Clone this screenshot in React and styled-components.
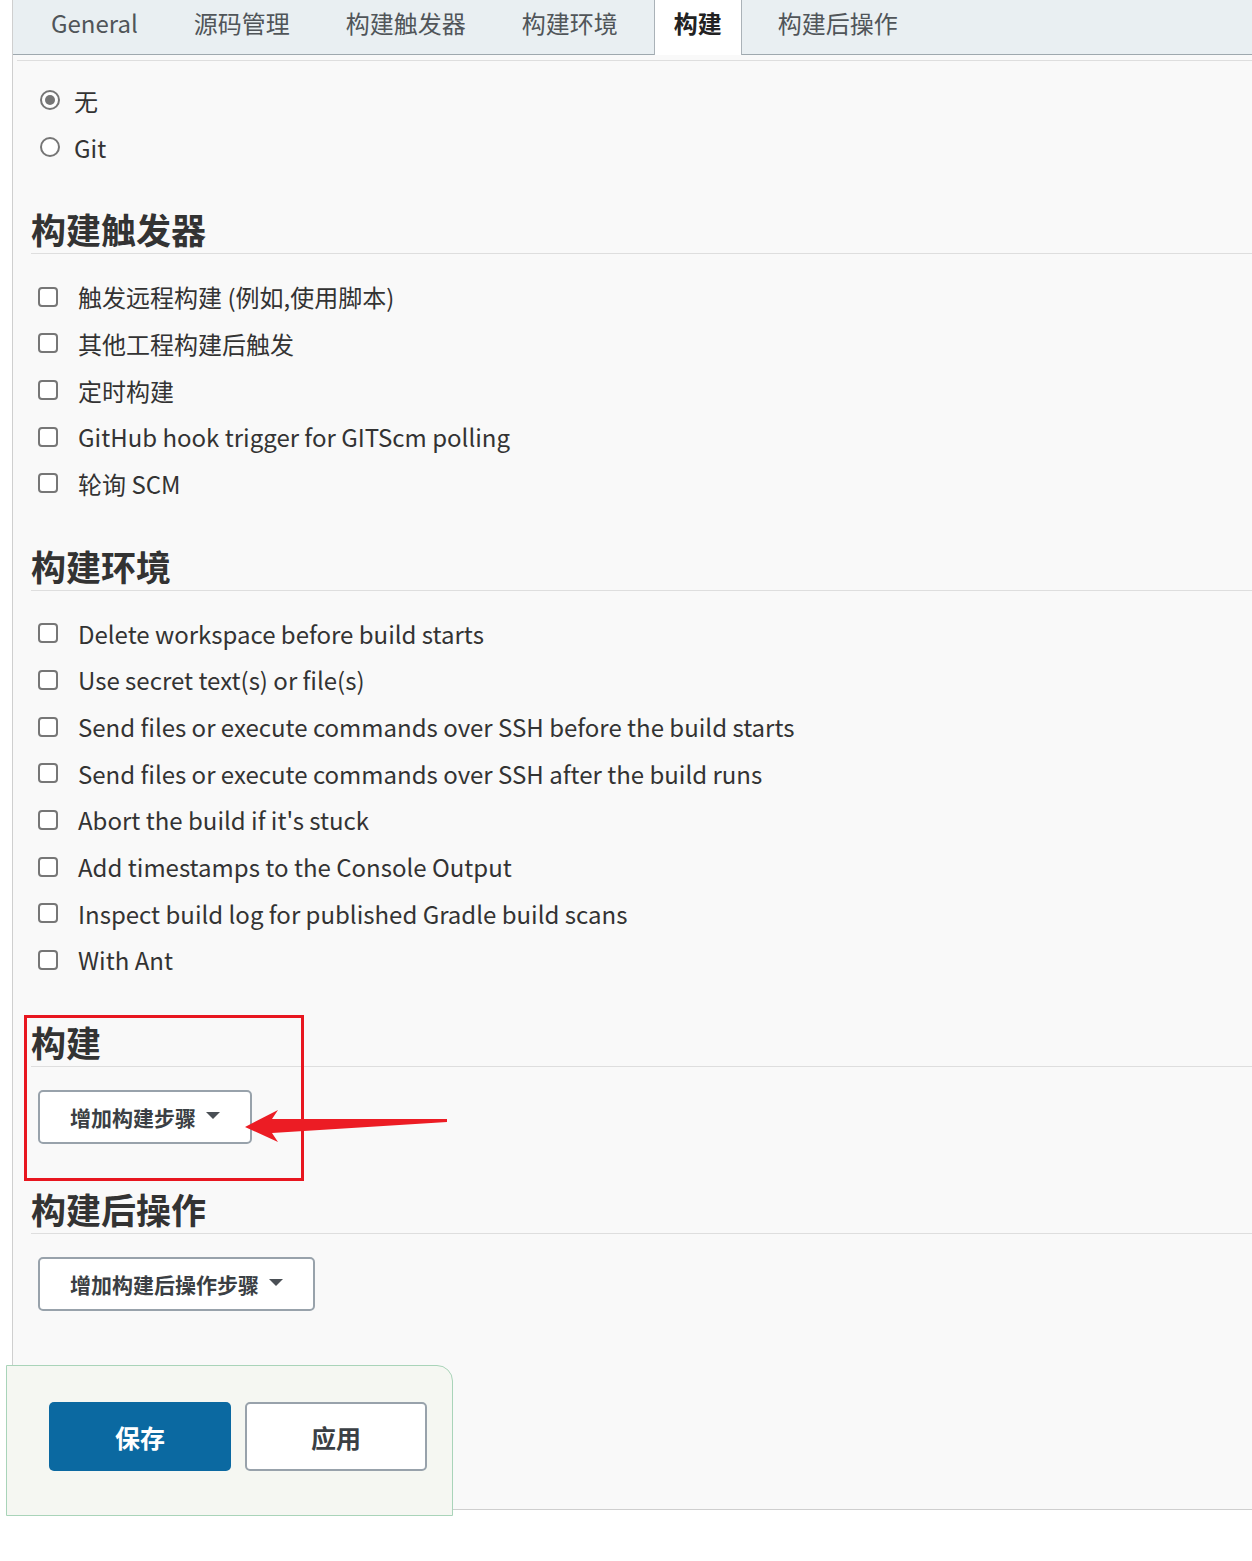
import React from 'react'
import styled, { createGlobalStyle } from 'styled-components';

const GlobalStyle = createGlobalStyle`
  html, body {
    margin: 0;
    padding: 0;
    background: #fff;
  }
  body {
    font-family: "Noto Sans CJK SC", "Noto Sans", sans-serif;
    color: #333;
  }
`

const tabs = ['General', '源码管理', '构建触发器', '构建环境', '构建', '构建后操作']

const triggers = [
  '触发远程构建 (例如,使用脚本)',
  '其他工程构建后触发',
  '定时构建',
  'GitHub hook trigger for GITScm polling',
  '轮询 SCM',
]

const envs = [
  'Delete workspace before build starts',
  'Use secret text(s) or file(s)',
  'Send files or execute commands over SSH before the build starts',
  'Send files or execute commands over SSH after the build runs',
  "Abort the build if it's stuck",
  'Add timestamps to the Console Output',
  'Inspect build log for published Gradle build scans',
  'With Ant',
]

const App = () => {
  return (
    <>
      <GlobalStyle />
      <Page>
        <Panel>
          <TabBar>
            {tabs.map((t) => (
              <Tab key={t} active={t === '构建'}>{t}</Tab>
            ))}
          </TabBar>
          <TopRule />
          <Content>
            <Options first>
              <Row>
                <Radio checked /> <RadioLabel>无</RadioLabel>
              </Row>
              <Row>
                <Radio /> <RadioLabel>Git</RadioLabel>
              </Row>
            </Options>

            <Heading>构建触发器</Heading>
            <Options>
              {triggers.map((t) => (
                <Row key={t}>
                  <Box />
                  <Label>{t}</Label>
                </Row>
              ))}
            </Options>

            <Heading>构建环境</Heading>
            <Options>
              {envs.map((t) => (
                <Row key={t}>
                  <Box />
                  <Label>{t}</Label>
                </Row>
              ))}
            </Options>

            <Marked>
              <Heading>构建</Heading>
              <StepArea>
                <DropButton>
                  增加构建步骤 <Caret />
                </DropButton>
              </StepArea>
              <Highlight />
              <Arrow viewBox="0 0 210 36" width="210" height="36">
                <polygon
                  points="0,17 33,0 27,9 202,9 202,12 27,23 33,32"
                  fill="#ec1c24"
                />
              </Arrow>
            </Marked>

            <Heading spaced>构建后操作</Heading>
            <StepArea>
              <DropButton>
                增加构建后操作步骤 <Caret />
              </DropButton>
            </StepArea>
          </Content>

          <BottomBar>
            <SaveButton>保存</SaveButton>
            <ApplyButton>应用</ApplyButton>
          </BottomBar>
        </Panel>
      </Page>
    </>
  )
}

export default App;

const Page = styled.div`
  width: 1252px;
  min-height: 1561px;
  background: #fff;
  overflow: hidden;
`

const Panel = styled.div`
  margin-left: 12px;
  border-left: 1px solid #cfcfcf;
  border-bottom: 1px solid #cfcfcf;
  background: #f9f9f9;
  display: flex;
  flex-direction: column;
`

const TabBar = styled.div`
  height: 55px;
  background: #e9eff2;
  border-bottom: 1px solid #9ea8ae;
  display: flex;
  align-items: stretch;
  gap: 16px;
  padding-left: 18px;
  box-sizing: border-box;
`

const Tab = styled.div`
  display: flex;
  align-items: center;
  padding: 0 19px 11px;
  margin-bottom: -1px;
  font-size: 24px;
  color: ${(p) => (p.active ? '#222' : '#505559')};
  font-weight: ${(p) => (p.active ? 700 : 400)};
  background: ${(p) => (p.active ? '#fff' : 'transparent')};
  border-left: 1px solid ${(p) => (p.active ? '#aab2b8' : 'transparent')};
  border-right: 1px solid ${(p) => (p.active ? '#aab2b8' : 'transparent')};
`

const TopRule = styled.div`
  height: 1px;
  background: #dedede;
  margin: 5px 0 0 4px;
`

const Content = styled.div`
  padding: 16px 0 0 18px;
`

const Options = styled.div`
  display: flex;
  flex-direction: column;
  padding-left: 7px;
  padding-top: ${(p) => (p.first ? '0' : '19px')};
`

const Row = styled.div`
  height: 46.7px;
  display: flex;
  align-items: center;
  font-size: 24px;
`

const Radio = styled.span`
  width: 20px;
  height: 20px;
  margin-left: 2px;
  box-sizing: border-box;
  border-radius: 50%;
  border: 2px solid #767676;
  background: #fff;
  position: relative;
  flex-shrink: 0;
  &::after {
    content: "";
    display: ${(p) => (p.checked ? 'block' : 'none')};
    position: absolute;
    left: 3px;
    top: 3px;
    width: 10px;
    height: 10px;
    border-radius: 50%;
    background: #767676;
  }
`

const RadioLabel = styled.span`
  margin-left: 14px;
  color: #333;
`

const Box = styled.span`
  width: 20px;
  height: 20px;
  box-sizing: border-box;
  border: 2px solid #767676;
  border-radius: 4px;
  background: #fff;
  flex-shrink: 0;
`

const Label = styled.span`
  margin-left: 20px;
  color: #333;
  white-space: nowrap;
`

const Heading = styled.h2`
  margin: ${(p) => (p.spaced ? '41px' : '35px')} 0 0;
  font-size: 35px;
  line-height: 48px;
  font-weight: 700;
  color: #333;
  border-bottom: 1px solid #dedede;
`

const Marked = styled.div`
  position: relative;
`

const Highlight = styled.div`
  position: absolute;
  left: -7px;
  top: -3px;
  width: 280px;
  height: 166px;
  box-sizing: border-box;
  border: 3px solid #e8161f;
  pointer-events: none;
`

const Arrow = styled.svg`
  position: absolute;
  left: 214px;
  top: 92px;
  overflow: visible;
`

const StepArea = styled.div`
  padding: 23px 0 0 7px;
`

const DropButton = styled.button`
  display: inline-flex;
  align-items: center;
  gap: 10px;
  height: 54px;
  padding: 0 30px;
  box-sizing: border-box;
  background: #fff;
  border: 2px solid #98a2ab;
  border-radius: 5px;
  font-family: inherit;
  font-size: 21px;
  font-weight: 700;
  color: #3b3f44;
`

const Caret = styled.span`
  width: 0;
  height: 0;
  border-left: 7px solid transparent;
  border-right: 7px solid transparent;
  border-top: 7px solid #4a4f55;
  margin-top: -4px;
`

const BottomBar = styled.div`
  margin: 54px 0 -7px -7px;
  width: 447px;
  height: 151px;
  box-sizing: border-box;
  background: #f5f7f2;
  border: 1px solid #a9d4b9;
  border-top-right-radius: 16px;
  display: flex;
  gap: 14px;
  padding: 36px 0 0 42px;
  position: relative;
`

const SaveButton = styled.button`
  width: 182px;
  height: 69px;
  border: none;
  border-radius: 5px;
  background: #0b69a1;
  color: #fff;
  font-family: inherit;
  font-size: 25px;
  font-weight: 700;
`

const ApplyButton = styled.button`
  width: 182px;
  height: 69px;
  box-sizing: border-box;
  border: 2px solid #98a2ab;
  border-radius: 5px;
  background: #fff;
  color: #3b3f44;
  font-family: inherit;
  font-size: 25px;
  font-weight: 700;
`
